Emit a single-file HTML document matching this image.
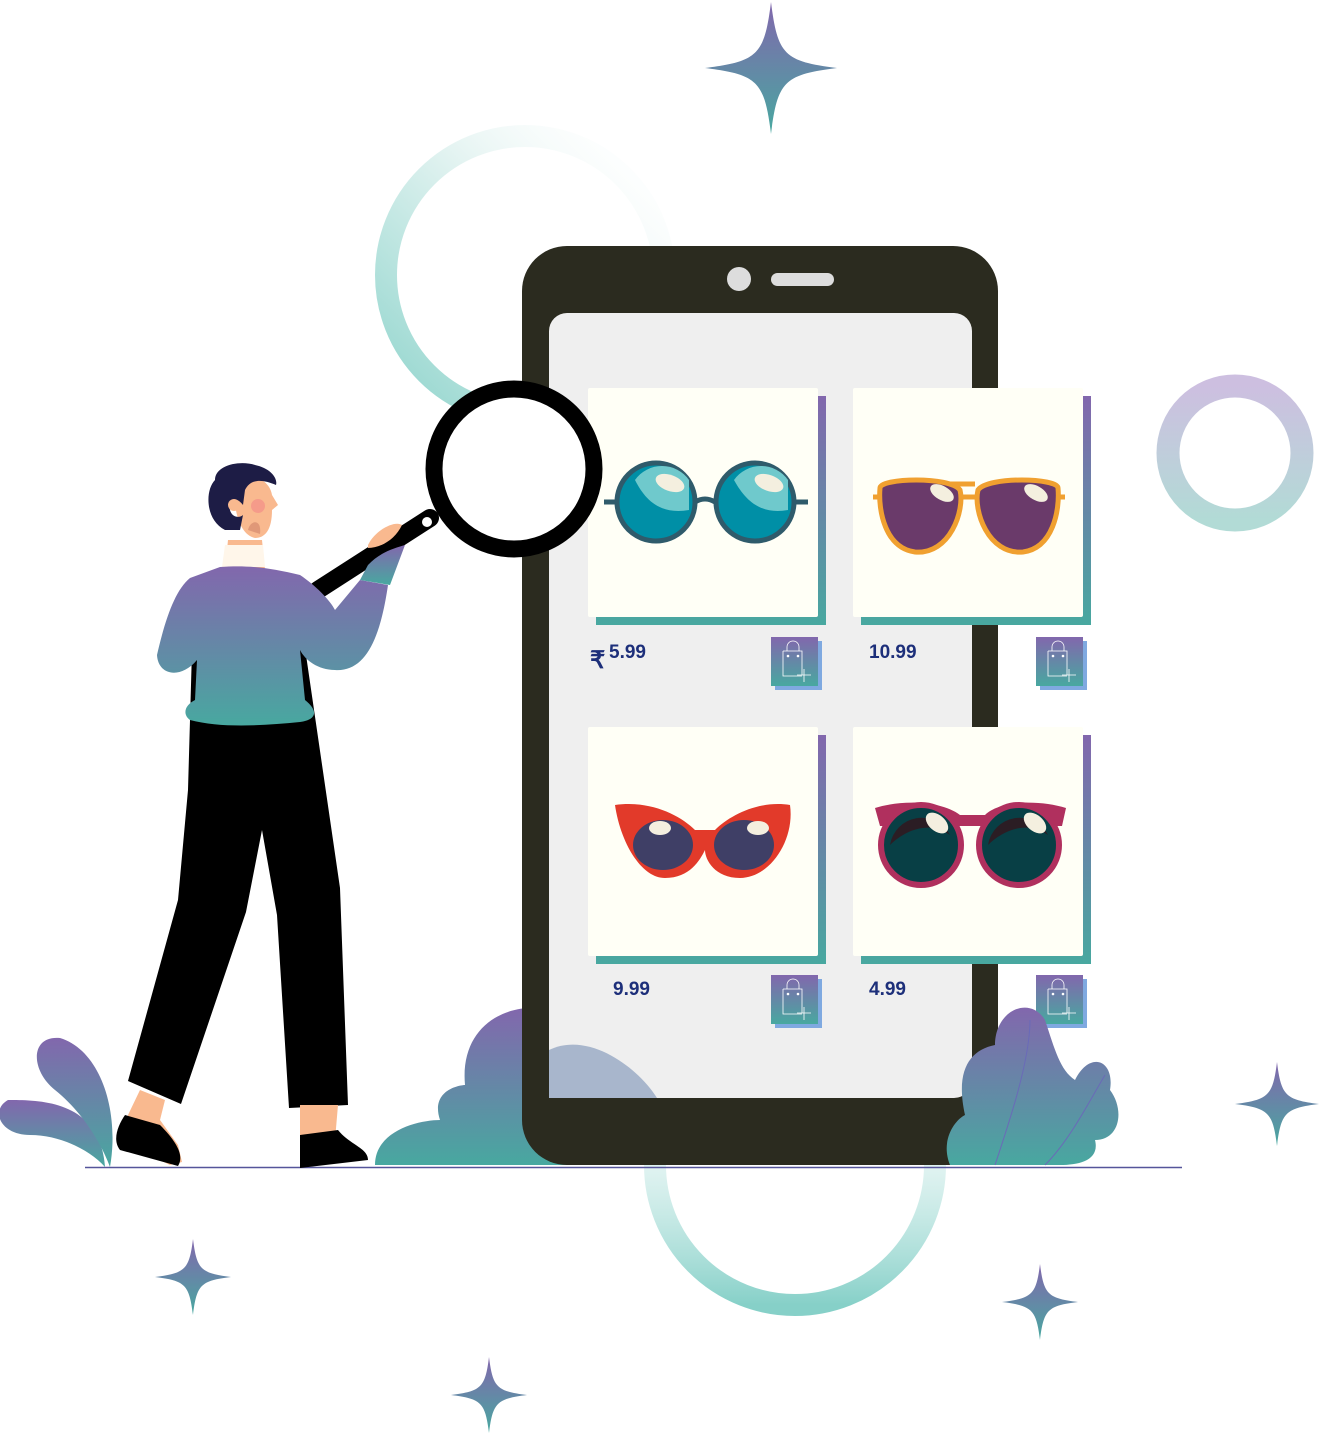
<!DOCTYPE html>
<html><head><meta charset="utf-8"><style>
html,body{margin:0;padding:0;background:#fff;width:1322px;height:1435px;overflow:hidden}
svg{display:block}
text{font-family:"Liberation Sans",sans-serif;font-weight:bold;fill:#1d2f7a}
</style></head><body>
<svg width="1322" height="1435" viewBox="0 0 1322 1435" xmlns="http://www.w3.org/2000/svg">
<defs>
<linearGradient id="pt" x1="0" y1="0" x2="0" y2="1"><stop offset="0" stop-color="#8267ad"/><stop offset="1" stop-color="#48a8a0"/></linearGradient>
<linearGradient id="ringA" x1="0" y1="1" x2="1" y2="0"><stop offset="0" stop-color="#8fd4cc"/><stop offset="0.6" stop-color="#e5f4f2"/><stop offset="1" stop-color="#fff" stop-opacity="0"/></linearGradient>
<linearGradient id="ringB" x1="0" y1="1" x2="0" y2="0"><stop offset="0" stop-color="#86d0c8"/><stop offset="1" stop-color="#fff" stop-opacity="0"/></linearGradient>
<linearGradient id="ringC" x1="0" y1="0" x2="0" y2="1"><stop offset="0" stop-color="#cdbfe0"/><stop offset="1" stop-color="#b2dbd6"/></linearGradient>
<g id="star"><path d="M0,-1 C0.1,-0.2 0.2,-0.1 1,0 C0.2,0.1 0.1,0.2 0,1 C-0.1,0.2 -0.2,0.1 -1,0 C-0.2,-0.1 -0.1,-0.2 0,-1Z"/></g>
<g id="bag"><rect x="4" y="4" width="47" height="49" fill="#7fa9e0"/><rect x="0" y="0" width="47" height="49" fill="url(#pt)"/>
<path d="M12,14 h19 v24 M12,14 v25 h19 M16,14 v-4 a6,6 0 0 1 12,0 v4 M26,38 h14 M33,32 v13" stroke="#fff" stroke-width="0.8" fill="none"/><circle cx="17" cy="19" r="1.3" fill="#fff"/><circle cx="27" cy="19" r="1.3" fill="#fff"/></g>
<g id="card"><rect x="8" y="8" width="230" height="229" fill="url(#pt)"/><rect x="0" y="0" width="230" height="229" fill="#fffff6" rx="2"/></g>
</defs>
<!-- rings -->
<circle cx="525" cy="275" r="139" fill="none" stroke="url(#ringA)" stroke-width="22"/>
<circle cx="795" cy="1165" r="140" fill="none" stroke="url(#ringB)" stroke-width="22"/>
<circle cx="1235" cy="453" r="67" fill="none" stroke="url(#ringC)" stroke-width="23"/>
<!-- stars -->
<g fill="url(#pt)">
<use href="#star" transform="translate(771,68) scale(66)"/>
<use href="#star" transform="translate(1277,1104) scale(42)"/>
<use href="#star" transform="translate(193,1277) scale(38)"/>
<use href="#star" transform="translate(1040,1302) scale(38)"/>
<use href="#star" transform="translate(489,1395) scale(38)"/>
</g>
<!-- left plants -->
<path d="M105,1167 C100,1100 40,1100 8,1100 C-10,1110 0,1135 30,1135 C60,1135 90,1150 105,1167Z" fill="url(#pt)"/>
<path d="M110,1167 C120,1110 100,1050 60,1038 C30,1035 30,1070 55,1090 C80,1110 100,1140 110,1167Z" fill="url(#pt)"/>
<!-- bush behind phone -->
<path d="M375,1165 C375,1130 420,1120 440,1120 C430,1090 460,1085 465,1085 C460,1030 500,1005 540,1008 C580,1010 600,1060 600,1060 C640,1060 660,1100 660,1165Z" fill="url(#pt)"/>
<!-- phone -->
<rect x="522" y="246" width="476" height="919" rx="45" fill="#2b2b1f"/>
<rect x="549" y="313" width="423" height="785" rx="18" fill="#efefef"/>
<path d="M549,1098 L549,1050 C590,1030 640,1070 657,1098Z" fill="#a8b6cc"/>
<circle cx="739" cy="279" r="12" fill="#ddd"/>
<rect x="771" y="273" width="63" height="13" rx="6.5" fill="#ddd"/>
<!-- cards -->
<use href="#card" x="588" y="388"/><use href="#card" x="853" y="388"/>
<use href="#card" x="588" y="727"/><use href="#card" x="853" y="727"/>
<use href="#bag" x="771" y="637"/><use href="#bag" x="1036" y="637"/>
<use href="#bag" x="771" y="975"/><use href="#bag" x="1036" y="975"/>
<text x="590" y="668" font-size="24">₹</text><text x="609" y="658" font-size="19">5.99</text>
<text x="869" y="658" font-size="19">10.99</text>
<text x="613" y="995" font-size="19">9.99</text>
<text x="869" y="995" font-size="19">4.99</text>
<!-- glasses 1 -->
<g stroke="#2f5b6b" stroke-width="5"><line x1="604" y1="502" x2="620" y2="502"/><line x1="792" y1="502" x2="808" y2="502"/><path d="M695,502 q10,-6 20,0" fill="none"/></g>
<circle cx="656" cy="502" r="39" fill="#008fa6" stroke="#2f5b6b" stroke-width="5"/>
<circle cx="755" cy="502" r="39" fill="#008fa6" stroke="#2f5b6b" stroke-width="5"/>
<path d="M635,480 a33,33 0 0 1 54,0 l0,30 C660,515 645,500 635,480Z" fill="#6fc9cc"/>
<path d="M734,480 a33,33 0 0 1 54,0 l0,30 C760,515 745,500 734,480Z" fill="#6fc9cc"/>
<ellipse cx="670" cy="483" rx="15" ry="8" fill="#f4efdf" transform="rotate(20 670 483)"/>
<ellipse cx="769" cy="483" rx="15" ry="8" fill="#f4efdf" transform="rotate(20 769 483)"/>
<!-- glasses 2 aviator -->
<path d="M873,497 h192 M935,484 h40" stroke="#f0a030" stroke-width="5" fill="none"/>
<path d="M880,488 C880,478 950,476 960,490 C965,510 950,555 915,552 C885,548 878,510 880,488Z" fill="#6a3a6a" stroke="#f0a030" stroke-width="5"/>
<path d="M1058,488 C1058,478 988,476 978,490 C973,510 988,555 1023,552 C1053,548 1060,510 1058,488Z" fill="#6a3a6a" stroke="#f0a030" stroke-width="5"/>
<ellipse cx="942" cy="493" rx="13" ry="7" fill="#f4efdf" transform="rotate(30 942 493)"/>
<ellipse cx="1036" cy="493" rx="13" ry="7" fill="#f4efdf" transform="rotate(30 1036 493)"/>
<!-- glasses 3 cat -->
<path d="M615,805 C650,800 680,815 695,830 L715,830 C730,815 760,800 790,805 C795,840 770,878 740,878 C715,878 705,860 705,850 C700,860 690,878 665,878 C640,878 620,840 615,805Z" fill="#e23a2a"/>
<ellipse cx="663" cy="845" rx="30" ry="25" fill="#3f3f66"/>
<ellipse cx="744" cy="845" rx="30" ry="25" fill="#3f3f66"/>
<ellipse cx="660" cy="828" rx="11" ry="7" fill="#f4efdf"/><ellipse cx="758" cy="828" rx="11" ry="7" fill="#f4efdf"/>
<!-- glasses 4 -->
<path d="M875,808 C900,800 940,800 960,815 L985,815 C1000,800 1040,800 1066,808 L1062,826 L880,826Z" fill="#b0305e"/>
<circle cx="921" cy="845" r="40" fill="#083f45" stroke="#b0305e" stroke-width="6"/>
<circle cx="1019" cy="845" r="40" fill="#083f45" stroke="#b0305e" stroke-width="6"/>
<path d="M890,845 a32,32 0 0 1 60,-10 C930,820 905,830 890,845Z" fill="#2b1d24"/>
<path d="M988,845 a32,32 0 0 1 60,-10 C1028,820 1003,830 988,845Z" fill="#2b1d24"/>
<ellipse cx="937" cy="823" rx="13" ry="8" fill="#f4efdf" transform="rotate(40 937 823)"/>
<ellipse cx="1035" cy="823" rx="13" ry="8" fill="#f4efdf" transform="rotate(40 1035 823)"/>
<!-- right bush -->
<path d="M950,1165 C940,1140 955,1120 965,1115 C955,1070 970,1050 995,1045 C995,1010 1030,995 1045,1020 C1055,1050 1060,1070 1075,1080 C1090,1050 1115,1060 1110,1090 C1125,1110 1120,1140 1095,1140 C1100,1160 1080,1165 1060,1165Z" fill="url(#pt)"/>
<path d="M995,1165 C1010,1120 1030,1060 1030,1020 M1045,1165 C1070,1140 1090,1100 1105,1075" stroke="#6a6ab8" stroke-width="1" fill="none"/>
<!-- ground -->
<line x1="85" y1="1167.5" x2="1182" y2="1167.5" stroke="#55559a" stroke-width="1.5"/>
<!-- magnifier -->
<line x1="430" y1="518" x2="318" y2="590" stroke="#000" stroke-width="18" stroke-linecap="round"/>
<circle cx="514" cy="469" r="80" fill="#fff" stroke="#000" stroke-width="17"/>
<circle cx="427" cy="522" r="5" fill="#fff"/>
<!-- man -->
<path d="M192,650 L305,648 L340,888 L348,1105 L289,1108 L277,915 L262,830 L246,912 L181,1104 L128,1081 L178,900 L188,790Z" fill="#000"/>
<path d="M140,1090 L128,1115 L118,1140 L170,1165 L182,1162 L178,1145 L160,1120 L165,1100Z" fill="#f9b98f"/>
<path d="M125,1115 L160,1125 C175,1140 185,1155 178,1166 L120,1150 C112,1140 118,1125 125,1115Z" fill="#000"/>
<path d="M300,1105 L300,1140 L335,1140 L338,1105Z" fill="#f9b98f"/>
<path d="M300,1135 L338,1130 C350,1145 368,1148 368,1160 L300,1168Z" fill="#000"/>
<path d="M228,540 L262,540 L265,570 L225,570Z" fill="#f9b98f"/>
<path d="M225,545 L263,545 L265,567 L222,567Z" fill="#fff6ea"/>
<path d="M220,567 C250,565 270,568 300,575 C315,585 330,600 335,610 L360,580 L388,585 C380,640 365,672 335,670 C318,670 305,660 300,650 L305,700 C320,712 315,720 300,722 C260,726 220,728 190,720 C182,714 185,705 195,700 L197,660 C180,680 158,675 157,655 C165,620 175,590 190,578Z" fill="url(#pt)"/>
<path d="M390,585 L405,545 C395,548 380,552 368,565 L360,580Z" fill="url(#pt)"/>
<path d="M368,545 C375,530 395,520 402,525 C395,540 380,548 368,548Z" fill="#f9b98f"/>
<path d="M235,480 C232,510 240,535 255,538 C265,538 272,530 272,510 L278,505 L272,495 C270,480 250,470 235,480Z" fill="#f9b98f"/>
<circle cx="258" cy="506" r="7" fill="#f59b8a"/>
<path d="M248,530 C250,520 262,518 260,534Z" fill="#e09878"/>
<path d="M225,530 C205,520 205,490 215,480 C215,465 240,460 255,465 C270,468 278,478 276,485 C260,478 250,480 245,490 L243,505 C235,495 228,500 230,510 C232,518 240,518 243,515 L240,530Z" fill="#1d1c45"/>
<circle cx="234" cy="505" r="6" fill="#f9b98f"/>
</svg>
</body></html>
